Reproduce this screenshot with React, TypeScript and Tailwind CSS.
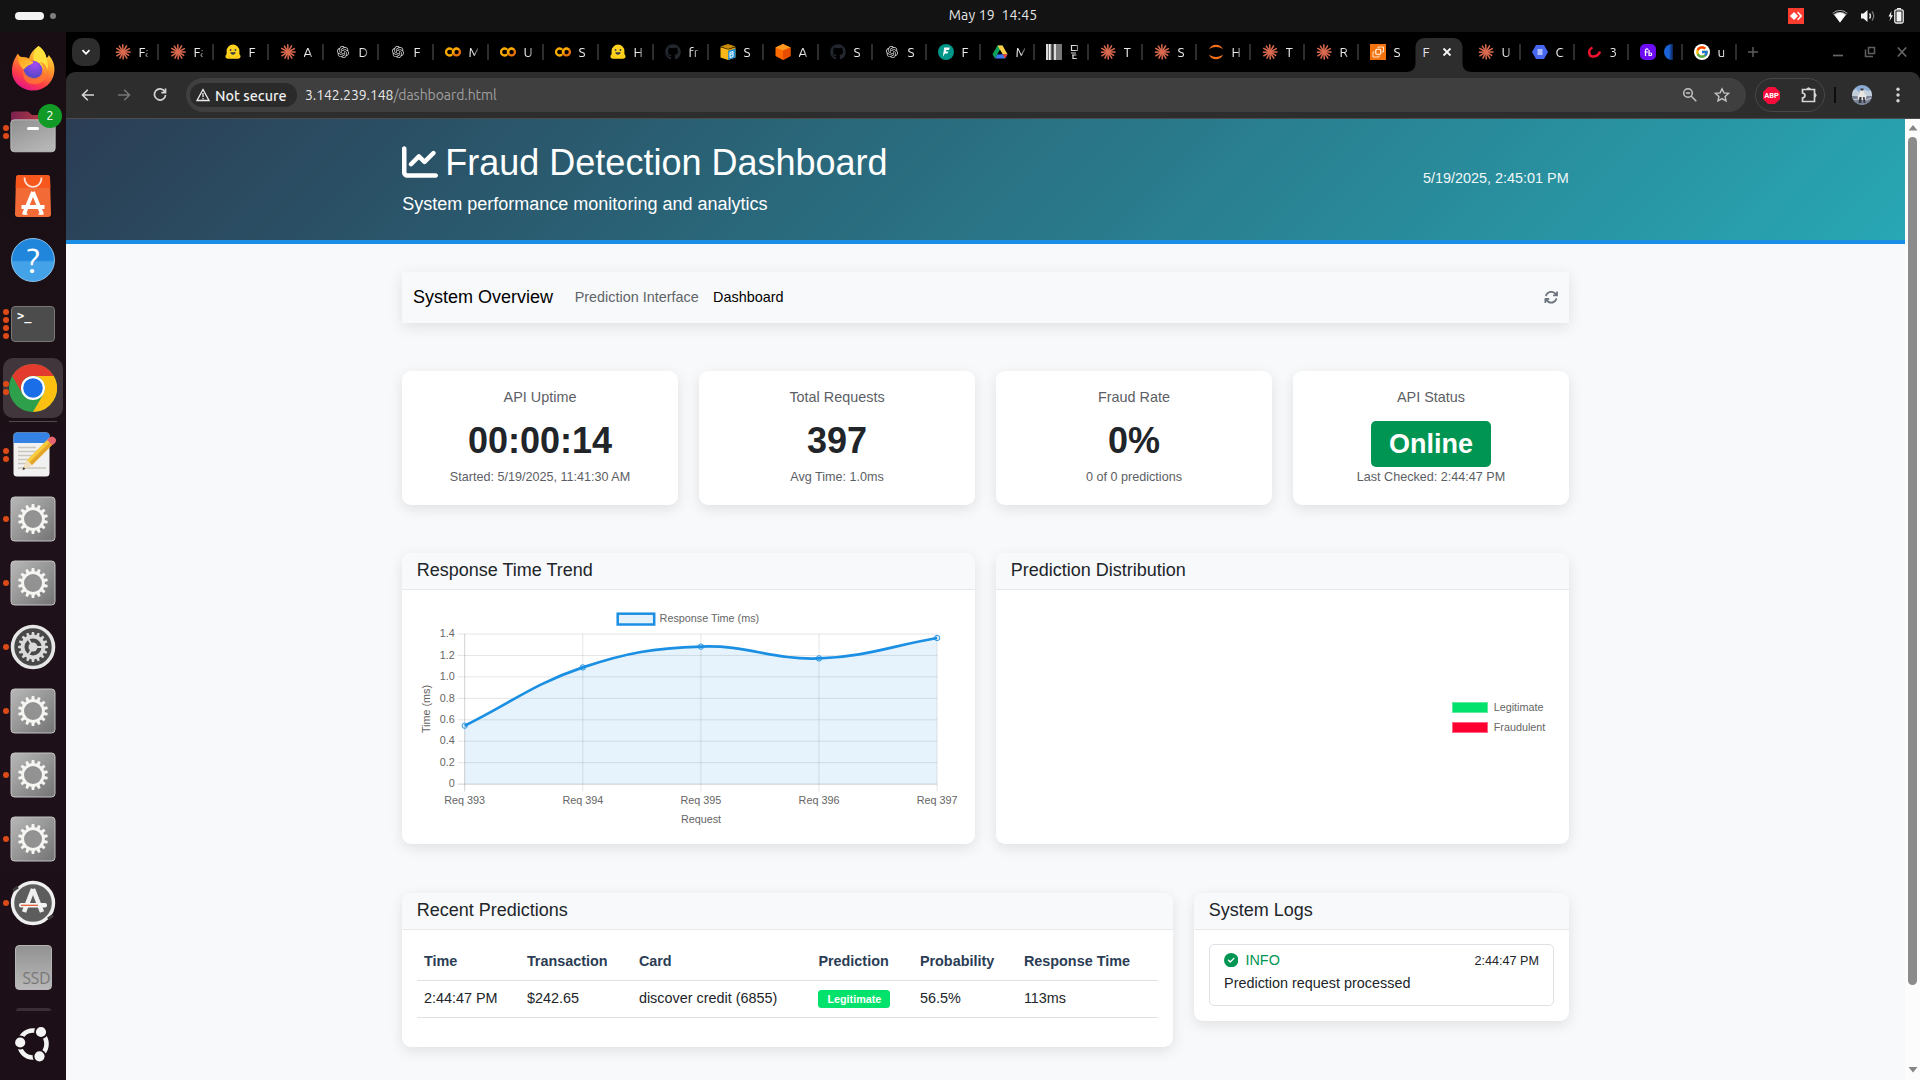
import React from "react";
import { FaGithub } from "react-icons/fa";
import { FaArrowsRotate, FaChartLine, FaCircleCheck } from "react-icons/fa6";
import { FcGoogle } from "react-icons/fc";
import { SiOpenai } from "react-icons/si";

const UI = "font-[Ubuntu,'Noto_Sans',sans-serif]";
const SHADOW = "shadow-[0_4px_14px_rgba(0,0,0,0.1)]";

/* ---------- favicons ---------- */

function Burst() {
  const rays = [
    [0, 7.6], [31, 7.2], [58, 7.8], [88, 7.6], [117, 7.4], [148, 7.8],
    [178, 7.2], [210, 7.8], [238, 7.4], [268, 7.8], [300, 7.6], [332, 7.8],
  ];
  return (
    <svg viewBox="-8 -8 16 16" className="size-4">
      {rays.map(([a, r]) => (
        <line key={a} x1="0" y1="0" x2={r * Math.cos((a * Math.PI) / 180)} y2={r * Math.sin((a * Math.PI) / 180)} stroke="#dd6b50" strokeWidth="1.5" />
      ))}
    </svg>
  );
}

function Hugging() {
  return (
    <svg viewBox="0 0 16 16" className="size-4">
      <path d="M1.6 7a6.4 6.4 0 0 1 12.8 0v3.2c1.2 1 1.5 2.6.7 3.6-.8 1.100-2.600 1-4 .9H4.900c-1.400.1-3.200.2-4-.9-.8-1-.5-2.600.7-3.600z" fill="#ffd21e" />
      <circle cx="5.600" cy="6" r=".9" fill="#3a3b45" />
      <circle cx="10.400" cy="6" r=".9" fill="#3a3b45" />
      <path d="M5.300 8.300h5.400c0 3.300-5.400 3.300-5.400 0z" fill="#3a3b45" />
      <path d="M2.500 11.500l3 2.500M13.500 11.500l-3 2.500" stroke="#ffb60b" strokeWidth="1" />
    </svg>
  );
}

function Colab() {
  return (
    <svg viewBox="0 0 16 16" className="size-4" fill="none" strokeWidth="2.300">
      <path d="M7.200 5.700a3.500 3.500 0 1 0 0 4.600" stroke="#f9ab00" />
      <circle cx="11.500" cy="8" r="3.400" stroke="#e8710a" />
      <path d="M8.600 9.800a3.400 3.400 0 0 1 5.300-4.200" stroke="#f9ab00" />
    </svg>
  );
}

function Bucket() {
  return (
    <svg viewBox="0 0 16 16" className="size-4">
      <path d="M.5 2.500L8 0l7.500 2.500L8 5z" fill="#c98c0a" />
      <path d="M.5 3.200L8 5.600V16L.5 13.600z" fill="#f7b718" />
      <path d="M8 5.600l7.500-2.400v10.400L8 16z" fill="#e09b06" />
      <path d="M8.200 6.800L15.500 4.500v9L8.200 16z" fill="#1d8fdb" />
      <path d="M10 8.500l3-1v5l-3 1zM10.300 10.500l2.500-.8" fill="none" stroke="#fff" />
    </svg>
  );
}

function Cube() {
  return (
    <svg viewBox="0 0 16 16" className="size-4">
      <path d="M8 0l7.500 3.500v8.500L8 16 .5 12V3.500z" fill="#ff6a00" />
      <path d="M8 0l7.500 3.500L8 6.500.5 3.500z" fill="#ff9a1f" />
      <path d="M8 6.500l7.500-3v8.500L8 16z" fill="#e84c00" />
    </svg>
  );
}

function FastApi() {
  return (
    <svg viewBox="0 0 16 16" className="size-4">
      <circle cx="8" cy="8" r="8" fill="#009688" />
      <path d="M6.200 3.600h5.600L11 6H8.300l-.5 1.400h2.500l-.8 2.200H7L4.800 12.800z" fill="#fff" />
    </svg>
  );
}

function Drive() {
  return (
    <svg viewBox="0 0 16 16" className="size-4">
      <path d="M5.500 1.500h5L8 6 3 14.500.5 10.200z" fill="#0da05a" />
      <path d="M5.500 1.500h5l5 8.700h-5z" fill="#ffcf48" />
      <path d="M3 14.500l2.500-4.300h10L13 14.500z" fill="#3b78f0" />
      <path d="M13 14.500l-2.400-4.300h4.900z" fill="#e8402f" />
      <path d="M8 6l2.500 4.200h-5z" fill="#000" />
    </svg>
  );
}

function Bars() {
  return (
    <svg viewBox="0 0 16 16" className="size-4">
      <rect width="16" height="16" fill="#777" />
      <path d="M1 0v16M3.800 0v16M9 0v16" stroke="#f4f4f4" strokeWidth="1.600" />
      <path d="M6.500 0v16" stroke="#333" strokeWidth="1.600" />
    </svg>
  );
}

function Jupyter() {
  return (
    <svg viewBox="0 0 16 16" className="size-4" fill="#f3701e">
      <path d="M1 5.500A7.500 7.500 0 0 1 15 5.500C11 2.300 5 2.300 1 5.500zM1 10.500a7.500 7.500 0 0 0 14 0c-4 3.200-10 3.200-14 0z" />
    </svg>
  );
}

function Ec2() {
  return (
    <svg viewBox="0 0 16 16" className="size-4">
      <rect width="16" height="16" fill="#f4730f" />
      <rect x="5.800" y="5.200" width="5" height="5" rx="1" fill="none" stroke="#fff" strokeWidth="1.100" />
      <path d="M8 4V3h5.500v5H12M9 11.500v1.500H3V8h1.500" fill="none" stroke="#ffe3c8" strokeWidth="1" />
    </svg>
  );
}

function Hexagon() {
  return (
    <svg viewBox="0 0 16 16" className="size-4">
      <path d="M4 1h8l4 7-4 7H4L0 8z" fill="#4767ee" />
      <path d="M5.500 6h5M5.500 8h5M5.500 10h5" stroke="#cfdafc" strokeWidth="1.600" />
    </svg>
  );
}

function RedArc() {
  return (
    <svg viewBox="0 0 16 16" className="size-4">
      <path d="M6.500 3.500C1.500 6 2.500 13 7.500 12.500c3.500-.2 5.500-2 6.500-5" fill="none" stroke="#ed1230" strokeWidth="2.500" />
    </svg>
  );
}

function Purple() {
  return (
    <svg viewBox="0 0 16 16" className="size-4">
      <rect width="16" height="16" rx="5" fill="#6d0cf5" />
      <path d="M5.500 12V6.500c0-2 2.500-2 2.500-.7M4.500 8H8M9 6v5.500h1.500c1.600 0 1.600-2.500 0-2.500H9" fill="none" stroke="#fff" strokeWidth="1.200" />
    </svg>
  );
}

const OpenAi = () => <SiOpenai className="mx-0.5 size-3 text-[#d5d5d5]" />;
const Git = () => <FaGithub className="size-4 text-[#22272e]" />;
const Goog = () => (
  <span className="flex size-4 items-center justify-center rounded-full bg-white">
    <FcGoogle className="size-3.5" />
  </span>
);

type TabDef = [React.ComponentType, string];
const wideTabs: TabDef[] = [
  [Burst, "Fa"], [Burst, "Fa"], [Hugging, "F"], [Burst, "A"], [OpenAi, "D"], [OpenAi, "F"],
  [Colab, "M"], [Colab, "U"], [Colab, "S"], [Hugging, "H"], [Git, "fr"], [Bucket, "S"], [Cube, "A"],
];
const midTabs: TabDef[] = [
  [Git, "S"], [OpenAi, "S"], [FastApi, "F"], [Drive, "M"], [Bars, ""], [Burst, "T"],
  [Burst, "S"], [Jupyter, "H"], [Burst, "T"], [Burst, "R"], [Ec2, "S"],
];
const lastTabs: TabDef[] = [[Burst, "U"], [Hexagon, "C"], [RedArc, "3"], [Purple, ""], [Goog, "u"]];

function Tab({ def, wide, noSep }: { def: TabDef; wide?: boolean; noSep?: boolean }) {
  const Icon = def[0];
  return (
    <div className={`flex h-10 shrink-0 items-center ${wide ? "w-[55px]" : "w-[54px]"}`}>
      <span className="ml-[11px] flex w-4 shrink-0 justify-center"><Icon /></span>
      <span className="ml-2 w-[9px] shrink-0 overflow-hidden [mask-image:linear-gradient(90deg,#000_55%,rgba(0,0,0,0.35))] text-[13.500px] leading-4 whitespace-nowrap text-[#ececec]">
        {def[0] === Bars ? (
          <svg viewBox="0 0 9 16" className="h-4 w-[9px]" fill="none" stroke="#ddd" strokeWidth="1.200">
            <path d="M1.500 1.500h6v5h-6zM1 9h5M2 11h4.500M3 11v3.500h4" />
          </svg>
        ) : def[0] === Purple ? (
          <span className="block size-4 rounded-full bg-[#1b62d8]" />
        ) : (
          def[1]
        )}
      </span>
      {!noSep && <span className="ml-auto h-4 w-0.5 bg-[#2d2d2d]" />}
    </div>
  );
}

function TabStrip() {
  return (
    <div className="flex h-10 items-center overflow-hidden bg-black">
      <div className="ml-1.5 flex size-7 shrink-0 items-center justify-center rounded-[10px] bg-[#2d2d2d]">
        <svg viewBox="0 0 10 10" className="size-2.5" fill="none" stroke="#fff" strokeWidth="1.800"><path d="M1.500 3.200L5 6.800l3.500-3.600" /></svg>
      </div>
      <div className="ml-[3.500px] flex">
        {wideTabs.map((t, i) => <Tab key={i} def={t} wide />)}
        {midTabs.map((t, i) => <Tab key={i} def={t} noSep={i === 10} />)}
        <div className="relative h-10 w-[54px] shrink-0">
          <svg viewBox="0 0 66 34" className="absolute top-1.5 -left-[7px] h-[34px] w-[66px]" fill="#2d2d2d">
            <path d="M0 34C6 34 9.500 31 9.500 25V10C9.500 4 13 0 19 0h28c6 0 9.500 4 9.500 10v15c0 6 3.500 9 9.500 9z" />
          </svg>
          <div className="relative flex h-10 items-center pl-[10px] text-[13.500px] text-[#e4e4e4]">
            F
            <svg viewBox="0 0 10 10" className="ml-[12.500px] size-2.5" stroke="#f4f4f4" strokeWidth="1.800"><path d="M1.500 1.500l7 7M8.500 1.500l-7 7" /></svg>
          </div>
        </div>
        {lastTabs.map((t, i) => <Tab key={i} def={t} />)}
      </div>
      <svg viewBox="0 0 12 12" className="ml-2.5 size-3 shrink-0" stroke="#5c5c5c" strokeWidth="1.500"><path d="M6 1v10M1 6h10" /></svg>
      <div className="mr-[13px] ml-auto flex items-center gap-[21px]">
        <svg viewBox="0 0 10 10" className="size-2.5"><path d="M0 8.500h10" stroke="#666" strokeWidth="1.700" /></svg>
        <svg viewBox="0 0 12 12" className="size-3" fill="none" stroke="#606060" strokeWidth="1.500"><path d="M4.500 1.500h6v6h-6zM1.500 3.500v7h7.500" /></svg>
        <svg viewBox="0 0 10 10" className="size-2.5" stroke="#666" strokeWidth="1.600"><path d="M.8.500l8.400 9M9.200.500L.8 9.500" /></svg>
      </div>
    </div>
  );
}

function Toolbar() {
  return (
    <div className="bg-black">
      <div className="flex h-[47px] items-center rounded-t-[9px] border-b border-[#4c4c4c] bg-[#2d2d2d]">
        <svg viewBox="0 0 16 16" className="ml-[14px] size-4" fill="none" stroke="#d5d5d5" strokeWidth="1.600"><path d="M14 8H2.500M7.800 2.700L2.500 8l5.300 5.300" /></svg>
        <svg viewBox="0 0 16 16" className="ml-5 size-4" fill="none" stroke="#757575" strokeWidth="1.600"><path d="M2 8h11.500M8.200 2.700L13.500 8l-5.300 5.300" /></svg>
        <svg viewBox="0 0 16 16" className="ml-5 size-4" fill="none" stroke="#d5d5d5" strokeWidth="1.700"><path d="M12.800 4.500A5.600 5.600 0 1 0 13.600 8M13.500 1.500v4.200H9.300" /></svg>
        <div className="ml-[18px] flex h-[34px] w-[1560px] items-center rounded-full bg-[#3f3f3f]">
          <div className="ml-1 flex h-6 w-[107px] items-center rounded-full bg-[#2a2a2a] pl-1.5">
            <svg viewBox="0 0 14 14" className="size-3.5" fill="none" stroke="#eee" strokeWidth="1.300"><path d="M7 1.500l6 11H1zM7 5v4M7 10v1.300" /></svg>
            <span className="mt-px ml-[5px] text-[14.400px] leading-5 font-medium whitespace-nowrap text-[#f1f1f1]">Not secure</span>
          </div>
          <span className="ml-2 text-[14px] tracking-[-0.070px] whitespace-nowrap text-[#a0a0a0]"><span className="text-[#e8e8e8]">3.142.239.148</span>/dashboard.html</span>
          <svg viewBox="0 0 16 16" className="ml-auto size-4" fill="none" stroke="#c4c4c4" strokeWidth="1.500"><circle cx="6" cy="6" r="4.300" /><path d="M9.300 9.300l5 5M4 6h4" /></svg>
          <svg viewBox="0 0 16 16" className="mr-4 ml-4 size-4" fill="none" stroke="#c4c4c4" strokeWidth="1.400"><path d="M8 1.800l1.900 4.100 4.500.5-3.300 3 .9 4.400L8 11.600l-4 2.200.9-4.400-3.300-3 4.500-.5z" /></svg>
        </div>
        <div className="ml-[9px] flex h-[34px] w-[70px] items-center rounded-full border border-[#474747]">
          <svg viewBox="0 0 17 17" className="ml-[7px] size-[17px]">
            <path d="M5 0h7l5 5v7l-5 5H5l-5-5V5z" fill="#f70c3b" />
            <text x="8.500" y="11.200" textAnchor="middle" fontSize="7.500" fontWeight="700" fill="#fff" fontFamily="Roboto, sans-serif">ABP</text>
          </svg>
          <svg viewBox="0 0 18 18" className="ml-5 size-[18px]" fill="none" stroke="#d5d5d5" strokeWidth="1.700">
            <path d="M2.500 3.500H14.500V15.500H2.500V12c3.300-.500 3.300-4.500 0-5z" />
            <path d="M6.800 3a2 2 0 0 1 3.600 0zM15 7.500a2 2 0 0 1 0 3.600z" fill="#d5d5d5" strokeWidth="1" />
          </svg>
        </div>
        <span className="ml-[9px] h-4 w-0.5 bg-[#0c0c0c]" />
        <svg viewBox="0 0 20 20" className="ml-4 size-5">
          <clipPath id="avatar"><circle cx="10" cy="10" r="10" /></clipPath>
          <g clipPath="url(#avatar)">
            <rect width="20" height="20" fill="#8cacd6" />
            <path d="M0 6l4-2 3 3 4-3 5 2 4-1v6H0z" fill="#c3cedb" />
            <path d="M0 11h20v9H0z" fill="#7b8295" />
            <path d="M8 5h4v3l2.500 3-1 4h-7l-1-4L8 8z" fill="#e7e5e4" />
            <path d="M8.500 3.500h3v2h-3zM7.500 12h2v6H6.500zM11 12h1.500l1 6h-2z" fill="#343742" />
            <path d="M1 15l5-1M14 15l5-2" stroke="#c6c9cf" />
          </g>
        </svg>
        <svg viewBox="0 0 4 16" className="ml-6 h-4 w-1" fill="#d5d5d5"><circle cx="2" cy="2.300" r="1.700" /><circle cx="2" cy="8" r="1.700" /><circle cx="2" cy="13.700" r="1.700" /></svg>
      </div>
    </div>
  );
}

/* ---------- desktop ---------- */

function TopBar() {
  return (
    <div className="flex h-8 items-center bg-[#131313]">
      <div className="flex flex-1 items-center gap-1.5 pl-[15px]">
        <span className="h-2 w-[29px] rounded-full bg-[#f4f4f4]" />
        <span className="size-1.5 rounded-full bg-[#808080]" />
      </div>
      <span className="-mt-0.5 ml-[67px] text-[14px] tracking-[0.150px] whitespace-pre text-[#e6e6e6]">May 19  14:45</span>
      <div className="flex flex-1 items-center justify-end pr-4">
        <svg viewBox="0 0 16 16" className="size-4">
          <rect width="16" height="16" fill="#fb3c31" />
          <path d="M6 4l4 4-4 4-4-4zM9 4.500l1.200-.8L14.300 8l-4.100 4.300L9 11.500 12 8z" fill="#fff" />
        </svg>
        <svg viewBox="0 0 16 16" className="ml-7 size-4">
          <path d="M.5 5a11 11 0 0 1 15 0L8 14.500z" fill="#c8c8c8" />
          <path d="M1.500 5.800a10 10 0 0 1 13 0" stroke="#131313" fill="none" strokeWidth="1.200" />
          <path d="M2.800 7a8 8 0 0 1 10.400 0L8 14.500z" fill="#fff" />
        </svg>
        <svg viewBox="0 0 16 16" className="ml-3 size-4"><path d="M1 5.500h2.500L7.500 2v12l-4-3.500H1z" fill="#f4f4f4" /><path d="M9.500 5.500q2 2.500 0 5" stroke="#ddd" fill="none" strokeWidth="1.400" /><path d="M12 3.500q3.500 4.500 0 9" stroke="#777" fill="none" strokeWidth="1.300" /></svg>
        <svg viewBox="0 0 16 16" className="ml-3 size-4">
          <path d="M3.500 3L.5 8.500h2L1.500 13 5 7.300H3z" fill="#f4f4f4" />
          <path d="M9 .5h4" stroke="#f4f4f4" strokeWidth="1.200" />
          <rect x="6.800" y="1.800" width="8.400" height="13.200" rx="1.500" fill="none" stroke="#f4f4f4" strokeWidth="1.300" />
          <rect x="8.500" y="3.500" width="5" height="10" fill="#f4f4f4" />
        </svg>
      </div>
    </div>
  );
}

function Firefox() {
  return (
    <svg viewBox="0 0 44 46" className="h-[46px] w-11">
      <defs>
        <linearGradient id="ffa" x1=".8" y1="0" x2=".3" y2="1">
          <stop offset="0" stopColor="#fff23f" /><stop offset=".4" stopColor="#ff9a2a" /><stop offset=".75" stopColor="#ff3d48" /><stop offset="1" stopColor="#e2128c" />
        </linearGradient>
        <radialGradient id="ffb" cx=".6" cy=".2" r=".8"><stop offset="0" stopColor="#a44bf0" /><stop offset="1" stopColor="#4a46c4" /></radialGradient>
        <linearGradient id="ffc" x1="0" y1="0" x2="1" y2="1"><stop offset="0" stopColor="#ff9a1e" /><stop offset="1" stopColor="#ffca3a" /></linearGradient>
      </defs>
      <path d="M27.500 1c5.500 4 7 8 8 12 2-1 2.200-3 2.200-3C42 15 44 20 43.300 27 42 38 33 45.500 22 45.500S1 37.500 1 26C1 19 3.500 13 7 8.500c.3 2 1 3.500 2 4.500C12 11 16 12 18 13.500 19 9 22 5 27.500 1z" fill="url(#ffa)" />
      <path d="M27.500 1c5.500 4 7 8 8 12 2 6 2 12-2 17 0-9-6-12-11-15C22 9 24 4 27.500 1z" fill="#ffe03d" />
      <circle cx="22" cy="25" r="9.300" fill="url(#ffb)" />
      <path d="M7 9c2 4 6 3 10 5 2 1 2.500 2.500 5 2.500 1 2-3 3.500-5 4-1 1.500-3 2-4 4C10 22 6 17 7 9z" fill="url(#ffc)" />
      <path d="M12.700 25c2 7 11 11 18 5 4-5 1-11-2-13 6 1 8 6 7.500 12-1 7-8 11-15 10C14 38 11 32 12.700 25z" fill="#ff7a30" opacity=".75" />
    </svg>
  );
}

function Files() {
  return (
    <div className="relative">
      <svg viewBox="0 0 46 42" className="h-[42px] w-[46px]">
        <defs>
          <linearGradient id="fla"><stop offset="0" stopColor="#7b2250" /><stop offset="1" stopColor="#c9443d" /></linearGradient>
          <linearGradient id="flb" x1="0" y1="0" x2=".6" y2="1"><stop offset="0" stopColor="#8f8f8f" /><stop offset="1" stopColor="#b5b5b5" /></linearGradient>
        </defs>
        <path d="M1 20V3.500C1 1.500 2 .5 4 .5h14l4 3.500h19c2.500 0 4 1.500 4 4v12z" fill="url(#fla)" />
        <rect x=".8" y="8.800" width="44.400" height="32" rx="3.500" fill="url(#flb)" stroke="#c9c9c9" strokeWidth=".8" />
        <rect x="17" y="16" width="12" height="3" rx="1.500" fill="#fff" />
      </svg>
      <span className="absolute -top-[7px] left-[28px] flex size-6 items-center justify-center rounded-full bg-[#119b26] text-[13px] text-white">2</span>
    </div>
  );
}

function Software() {
  return (
    <svg viewBox="0 0 36 42" className="h-[42px] w-9">
      <path d="M4 0h28c2 0 3 1 3 3l1 36c0 2-1 3-3 3H3c-2 0-3-1-3-3L1 3c0-2 1-3 3-3z" fill="#f26a36" />
      <path d="M4 0h28c2 0 3 1 3 3l.3 10H.7L1 3c0-2 1-3 3-3z" fill="#f6571d" />
      <path d="M9.500 2.500c0 12.500 17 12.500 17 0" fill="none" stroke="#fbe2d8" strokeWidth="1.700" />
      <path d="M18 17L9 39M18 17l9 22M6.500 32h23" stroke="#fff" strokeWidth="3.800" fill="none" />
      <path d="M7.500 39h5M23.500 39h5" stroke="#fff" strokeWidth="1.500" />
    </svg>
  );
}

function Help() {
  return (
    <span className="flex size-[44px] items-center justify-center rounded-full border border-[#8cc4ee] bg-linear-to-b from-[#1f86dc] from-50% to-[#43a2e8] to-55% text-[34px] leading-none text-white">?</span>
  );
}

function Terminal() {
  return (
    <span className="flex h-9 w-11 rounded-[4px] border border-[#777] bg-[#4c4c4c] pl-[5px] font-['DejaVu_Sans_Mono',monospace] text-[12px] leading-[18px] font-bold text-white">&gt;_</span>
  );
}

function Chrome() {
  return (
    <svg viewBox="-24 -24 48 48" className="size-12">
      <circle r="24" fill="#2ea04b" />
      <path d="M-20.800-12A24 24 0 0 1 20.800-12H0A12 12 0 0 0-10.400 6z" fill="#e33b2e" />
      <path d="M20.800-12A24 24 0 0 1 0 24L10.400 6A12 12 0 0 0 0-12z" fill="#fcc010" />
      <circle r="12" fill="#fff" /><circle r="9.800" fill="#1a6fe8" />
    </svg>
  );
}

function Editor() {
  return (
    <svg viewBox="0 0 44 46" className="ml-1 h-[46px] w-11">
      <rect x=".5" y=".5" width="36" height="44" rx="3.500" fill="#f1f1f1" />
      <path d="M.5 11V4C.5 2 2 .5 4 .5h29c2 0 3.500 1.500 3.500 3.500v7z" fill="#3482e4" />
      <path d="M5 15.500h18M5 19.500h20M5 23.500h18M5 27.500h12M5 31.500h8M5 36h28" stroke="#c9c6bd" strokeWidth="1.700" />
      <path d="M14 28L36 6l5 5-22 22-9.500 5z" fill="#f7cb3e" />
      <path d="M16.500 30.500L38.500 8.500l2.500 2.500-22 22z" fill="#e4a427" />
      <path d="M14 28l5 5-9.500 5z" fill="#f0dfc4" /><path d="M10.500 35l2 2-3 1z" fill="#333" />
      <path d="M34 8l2-2c2-2 4-2 6 0s1 4-1 6l-2 1z" fill="#e9656e" />
    </svg>
  );
}

function gearPoints(teeth: number, outer: number, inner: number) {
  const pts: string[] = [];
  for (let i = 0; i < teeth; i++) {
    [[-0.32, inner], [-0.19, outer], [0.19, outer], [0.32, inner]].forEach(([o, r]) => {
      const a = ((i + o) / teeth) * Math.PI * 2 - Math.PI / 2;
      pts.push(`${(r * Math.cos(a)).toFixed(2)},${(r * Math.sin(a)).toFixed(2)}`);
    });
  }
  return pts.join(" ");
}

function Gear() {
  return (
    <svg viewBox="-23 -23 46 46" className="size-[46px]">
      <defs><linearGradient id="gg" x1="0" y1="0" x2="1" y2="1"><stop offset="0" stopColor="#b8b8b8" /><stop offset="1" stopColor="#737373" /></linearGradient></defs>
      <rect x="-22" y="-22" width="44" height="44" rx="3.500" fill="url(#gg)" stroke="#c4c4c4" strokeWidth="1" />
      <polygon points={gearPoints(14, 15, 11.800)} fill="#f5f5f2" />
      <circle r="9" fill="#929292" />
    </svg>
  );
}

function Settings() {
  return (
    <svg viewBox="-23 -23 46 46" className="size-[46px]">
      <circle r="20.500" fill="#484848" stroke="#e6e6e6" strokeWidth="3.600" />
      <polygon points={gearPoints(16, 15, 12.300)} fill="#dadada" />
      <circle r="8.500" fill="#484848" />
      <path d="M0 0h9M0 0l-4.500-7.800M0 0l-4.500 7.800" stroke="#dadada" strokeWidth="2" />
      <circle r="4.500" fill="#dadada" />
    </svg>
  );
}

function Updater() {
  return (
    <svg viewBox="-23 -23 46 46" className="size-[46px]">
      <circle r="20.500" fill="#5d5d5d" stroke="#efefef" strokeWidth="3.400" />
      <path d="M-20-12.500l5-3.500M15 16l5-3.500" stroke="#3a3a3a" strokeWidth="3" />
      <path d="M0-14L-9 9M0-14L9 9" stroke="#f0f0f0" strokeWidth="4.500" />
      <rect x="-14" y="0" width="28" height="4.500" rx="2" fill="#f4f4f4" />
      <path d="M-12 2.300H5" stroke="#e2542a" strokeWidth="1.200" />
    </svg>
  );
}

function Ssd() {
  return (
    <span className="flex h-[45px] w-[37px] items-end justify-end rounded-[4px] border border-[#b4b4b4] bg-linear-to-b from-[#929292] to-[#b9b9b9] text-[16px] leading-[22px] text-[#777]">SSD</span>
  );
}

function UbuntuMark() {
  return (
    <svg viewBox="-18 -18 36 36" className="size-9">
      <circle r="13.500" fill="none" stroke="#f4f4f4" strokeWidth="4.600" />
      {[[-12.800, -1.500], [8, -12], [6.500, 12.300]].map(([x, y]) => (
        <circle key={x} cx={x} cy={y} r="6" fill="#f4f4f4" stroke="#1c0f17" strokeWidth="1.800" />
      ))}
    </svg>
  );
}

function DockItem({ dots = 0, active, children }: { dots?: number; active?: boolean; children: React.ReactNode }) {
  return (
    <div className="relative flex h-16 w-[66px] shrink-0 items-center justify-center">
      {active && <span className="absolute inset-x-[3px] inset-y-0.5 rounded-[10px] bg-[#40363c]" />}
      <div className="absolute inset-y-0 left-[3px] flex flex-col justify-center gap-[2.500px]">
        {Array.from({ length: dots }, (_, i) => <span key={i} className="size-[5.500px] rounded-full bg-[#dc4b17]" />)}
      </div>
      <div className="relative">{children}</div>
    </div>
  );
}

function Dock() {
  return (
    <div className="flex w-[66px] shrink-0 flex-col items-center bg-linear-to-b from-[#190e14] via-[#1e1119] to-[#1c0f18] pt-1">
      <DockItem><Firefox /></DockItem>
      <DockItem dots={2}><Files /></DockItem>
      <DockItem><Software /></DockItem>
      <DockItem><Help /></DockItem>
      <DockItem dots={4}><Terminal /></DockItem>
      <DockItem dots={2} active><Chrome /></DockItem>
      <span className="mt-px mb-px h-px w-12 shrink-0 bg-[#55494f]" />
      <DockItem dots={2}><Editor /></DockItem>
      <DockItem dots={1}><Gear /></DockItem>
      <DockItem dots={1}><Gear /></DockItem>
      <DockItem dots={1}><Settings /></DockItem>
      <DockItem dots={1}><Gear /></DockItem>
      <DockItem dots={1}><Gear /></DockItem>
      <DockItem dots={1}><Gear /></DockItem>
      <DockItem dots={1}><Updater /></DockItem>
      <DockItem><Ssd /></DockItem>
      <span className="mt-[9px] h-[3px] w-[35px] shrink-0 rounded-t-[3px] bg-[#3a2e35]" />
      <span className="mt-[15px]"><UbuntuMark /></span>
    </div>
  );
}

/* ---------- page ---------- */

function Stat({ title, value, sub, badge }: { title: string; value: string; sub: string; badge?: boolean }) {
  return (
    <div className={`flex h-[134px] flex-1 flex-col items-center rounded-[9px] bg-white pt-[15px] ${SHADOW}`}>
      <span className="text-[14.400px] leading-[22px] text-[#5c6065]">{title}</span>
      {badge ? (
        <span className="mt-[13px] mb-px flex h-[46px] w-[120px] items-center justify-center rounded-[5px] bg-[#009552] text-[27px] leading-none font-bold text-white">{value}</span>
      ) : (
        <span className="mt-2 mb-[3px] flex h-[49px] items-center text-[36px] leading-none font-bold text-[#212529]">{value}</span>
      )}
      <span className="text-[12.600px] leading-[19px] text-[#5c6065]">{sub}</span>
    </div>
  );
}

function Panel({ title, className, children }: { title: string; className: string; children: React.ReactNode }) {
  return (
    <div className={`rounded-[9px] bg-white ${SHADOW} ${className}`}>
      <div className="flex h-[37px] items-center rounded-t-[9px] border-b border-[#e8e9eb] bg-[#f8f9fb] pb-[2px] pl-[14.400px] text-[18px] text-[#212529]">{title}</div>
      {children}
    </div>
  );
}

const points = [
  { x: 464.700, y: 725.700, label: "Req 393" },
  { x: 582.800, y: 667.400, label: "Req 394" },
  { x: 700.900, y: 646.600, label: "Req 395" },
  { x: 819, y: 658.400, label: "Req 396" },
  { x: 937.100, y: 638, label: "Req 397" },
];

function curve() {
  const tension = 0.4;
  const ctrl = points.map((p, i) => {
    const a = points[i - 1] ?? p;
    const b = points[i + 1] ?? p;
    const d0 = Math.hypot(p.x - a.x, p.y - a.y);
    const d1 = Math.hypot(b.x - p.x, b.y - p.y);
    const f0 = (tension * d0) / (d0 + d1);
    const f1 = (tension * d1) / (d0 + d1);
    return {
      px: p.x - f0 * (b.x - a.x), py: p.y - f0 * (b.y - a.y),
      nx: p.x + f1 * (b.x - a.x), ny: p.y + f1 * (b.y - a.y),
    };
  });
  let d = `M${points[0].x} ${points[0].y}`;
  for (let i = 1; i < points.length; i++) {
    d += ` C${ctrl[i - 1].nx} ${ctrl[i - 1].ny} ${ctrl[i].px} ${ctrl[i].py} ${points[i].x} ${points[i].y}`;
  }
  return d;
}

function TrendChart() {
  const ticks = ["1.4", "1.2", "1.0", "0.8", "0.6", "0.4", "0.2", "0"];
  const line = curve();
  return (
    <svg viewBox="402 590 572 254" className="h-[254px] w-[572px]" fontFamily="'Liberation Sans', Arial, sans-serif" fontSize="10.800">
      {ticks.map((t, i) => {
        const y = 634 + i * 21.450;
        return (
          <g key={t}>
            <line x1="457.500" x2="937.100" y1={y} y2={y} stroke="#000" strokeOpacity={i === 7 ? 0.18 : 0.1} />
            <text x="454.800" y={y + 3.200} textAnchor="end" fill="#666">{t}</text>
          </g>
        );
      })}
      {points.map((p, i) => (
        <g key={p.label}>
          <line x1={p.x} x2={p.x} y1="634" y2="791.500" stroke="#000" strokeOpacity={i === 0 ? 0.18 : 0.1} />
          <text x={p.x} y="804" textAnchor="middle" fill="#666">{p.label}</text>
        </g>
      ))}
      <path d={`${line} L937.100 784.200 L464.700 784.200Z`} fill="#1a8fe3" fillOpacity=".11" />
      <path d={line} fill="none" stroke="#1a8fe3" strokeWidth="2.700" />
      {points.map((p) => <circle key={p.x} cx={p.x} cy={p.y} r="2.700" fill="#1a8fe3" fillOpacity=".1" stroke="#1a8fe3" strokeWidth=".9" />)}
      <rect x="617.700" y="613.700" width="36.500" height="10.800" fill="#e6f2fb" stroke="#1a8fe3" strokeWidth="2.500" />
      <text x="659.600" y="622.400" fill="#666">Response Time (ms)</text>
      <text x="701" y="823" textAnchor="middle" fill="#666">Request</text>
      <text transform="translate(430.300 709) rotate(-90)" textAnchor="middle" fill="#666">Time (ms)</text>
    </svg>
  );
}

function DistributionChart() {
  return (
    <div className="flex h-[254px] flex-col justify-center gap-[9px] pr-[22.500px] text-[10.800px] leading-[11px] text-[#666]">
      <div className="ml-auto flex w-[94px] items-center gap-[5.500px]"><span className="h-[11px] w-9 border border-[#5eeb9f] bg-[#00e26c]" />Legitimate</div>
      <div className="ml-auto flex w-[94px] items-center gap-[5.500px]"><span className="h-[11px] w-9 border border-[#fb6482] bg-[#ff0030]" />Fraudulent</div>
    </div>
  );
}

function Predictions() {
  const cols = "grid grid-cols-[103px_112px_179.500px_101.500px_104px_1fr] border-b border-[#dee2e6] h-[37px] items-center pl-[7.200px]";
  return (
    <div className="px-[14.400px] pt-[14px] text-[14.400px] text-[#212529]">
      <div className={`${cols} font-bold text-[#2b3d54]`}>
        <span>Time</span><span>Transaction</span><span>Card</span><span>Prediction</span><span>Probability</span><span>Response Time</span>
      </div>
      <div className={cols}>
        <span>2:44:47 PM</span><span>$242.65</span><span>discover credit (6855)</span>
        <span className="flex h-[18px] w-[72px] items-center justify-center rounded-[3.500px] bg-[#00e26c] text-[10.800px] font-bold text-white">Legitimate</span>
        <span>56.5%</span><span>113ms</span>
      </div>
    </div>
  );
}

function Page() {
  return (
    <div className="flex min-h-0 flex-1 bg-[#f8f9fb] font-['Liberation_Sans',Arial,sans-serif]">
      <div className="flex min-w-0 flex-1 flex-col">
        <header className="h-[125px] shrink-0 border-b-4 border-[#1a8fe3] bg-[linear-gradient(135deg,#2b3d54,#28a7b4)]">
          <div className="mx-auto flex h-full w-[1166.400px] items-center justify-between text-white">
            <div>
              <h1 className="flex items-center text-[36px] leading-[43px]"><FaChartLine className="mr-[7px] mb-0.5 size-9" />Fraud Detection Dashboard</h1>
              <p className="mt-[7px] text-[18px] leading-[27px]">System performance monitoring and analytics</p>
            </div>
            <span className="mb-0.5 text-[14.400px] text-[#f0f7f8]">5/19/2025, 2:45:01 PM</span>
          </div>
        </header>
        <main className="mx-auto w-[1166.400px]">
          <nav className={`mt-7 flex h-[51px] items-center bg-[#f8f9fb] px-[10.800px] text-[14.400px] ${SHADOW}`}>
            <span className="text-[18px] text-black">System Overview</span>
            <span className="ml-[21.600px] text-[#606468]">Prediction Interface</span>
            <span className="ml-[14.400px] text-black">Dashboard</span>
            <FaArrowsRotate className="mb-px ml-auto size-[14.400px] text-[#6c757d]" />
          </nav>
          <div className="mt-12 flex gap-[21.600px]">
            <Stat title="API Uptime" value="00:00:14" sub="Started: 5/19/2025, 11:41:30 AM" />
            <Stat title="Total Requests" value="397" sub="Avg Time: 1.0ms" />
            <Stat title="Fraud Rate" value="0%" sub="0 of 0 predictions" />
            <Stat title="API Status" value="Online" sub="Last Checked: 2:44:47 PM" badge />
          </div>
          <div className="mt-12 flex gap-[21.600px]">
            <Panel title="Response Time Trend" className="h-[291px] flex-1"><TrendChart /></Panel>
            <Panel title="Prediction Distribution" className="h-[291px] flex-1"><DistributionChart /></Panel>
          </div>
          <div className="mt-[49px] flex items-start gap-[21.600px]">
            <Panel title="Recent Predictions" className="h-[154px] w-[770.400px]"><Predictions /></Panel>
            <Panel title="System Logs" className="h-[128px] flex-1">
              <div className="mx-[14.400px] mt-[14px] h-[62px] rounded-[5px] border border-[#dee2e6] px-[14.400px] pt-[5px] text-[#212529]">
                <div className="flex h-[22px] items-center text-[14.400px] text-[#009552]">
                  <FaCircleCheck className="mr-[7px] mb-0.5 size-[14.400px]" />INFO
                  <span className="ml-auto text-[12.600px] text-[#212529]">2:44:47 PM</span>
                </div>
                <p className="text-[14.400px] leading-[22px]">Prediction request processed</p>
              </div>
            </Panel>
          </div>
        </main>
      </div>
      <div className="flex w-[15px] shrink-0 flex-col items-center bg-[#fcfcfc]">
        <svg viewBox="0 0 10 6" className="mt-1.5 h-1.5 w-2.5 shrink-0"><path d="M5 0l4.500 5.500h-9z" fill="#858585" /></svg>
        <span className="mt-1.5 h-[848px] w-[9px] shrink-0 rounded-full bg-[#8b8b8b]" />
        <svg viewBox="0 0 10 6" className="mt-auto mb-[7px] h-1.5 w-2.5 shrink-0"><path d="M5 5.500L9.500 0h-9z" fill="#858585" /></svg>
      </div>
    </div>
  );
}

export default function App() {
  return (
    <div className={`flex h-[1080px] w-[1920px] flex-col overflow-hidden bg-black ${UI}`}>
      <TopBar />
      <div className="flex min-h-0 flex-1">
        <Dock />
        <div className="flex min-w-0 flex-1 flex-col">
          <TabStrip />
          <Toolbar />
          <Page />
        </div>
      </div>
    </div>
  );
}
